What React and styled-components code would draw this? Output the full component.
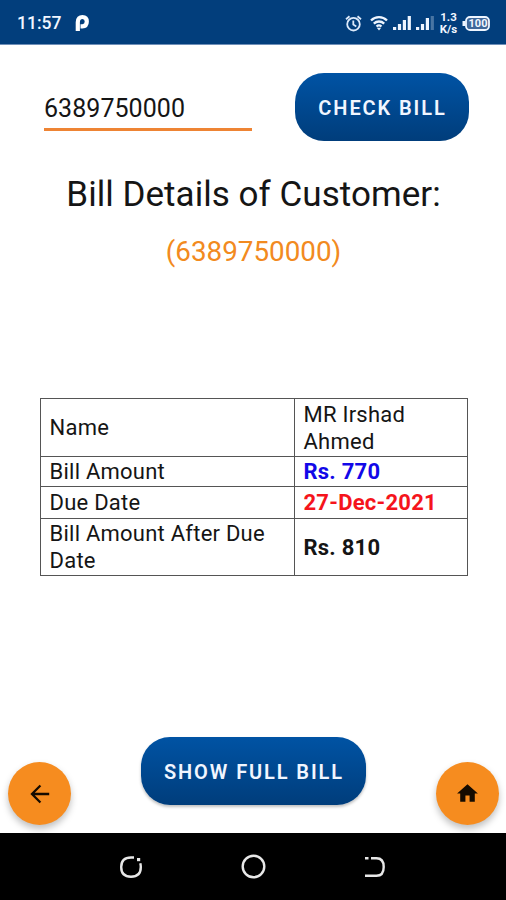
import React from 'react';
import styled, { createGlobalStyle } from 'styled-components';

const GlobalStyle = createGlobalStyle`
  * { box-sizing: border-box; }
  body { margin: 0; background: #fff; font-family: Roboto, sans-serif; color: #151515; }
`;

const Screen = styled.div`
  width: 506px;
  height: 900px;
  display: flex;
  flex-direction: column;
  overflow: hidden;
  background: #fff;
`;

const StatusBar = styled.header`
  height: 45px;
  flex: none;
  display: flex;
  align-items: center;
  padding: 2px 16px 0 17px;
  background: #023e7c;
  border-bottom: 1px solid #6f8fb8;
  color: #f1f6ff;
`;

const Clock = styled.span`
  font-size: 17.5px;
  font-weight: 500;
  width: 58px;
`;

const StatusIcons = styled.div`
  margin-left: auto;
  display: flex;
  align-items: center;
`;

const Glyph = styled.svg`
  display: block;
  flex: none;
  margin-left: ${(p) => p.$gap || 0}px;
`;

const Speed = styled.span`
  width: 21px;
  margin-left: 4px;
  margin-right: 1px;
  font-size: 11.5px;
  line-height: 12px;
  font-weight: 700;
  text-align: center;
`;

const Battery = styled.span`
  position: relative;
  width: 28px;
  height: 15px;
  margin-left: 2px;
`;

const BatteryLevel = styled.span`
  position: absolute;
  inset: 0 0 0 4px;
  font-size: 11px;
  line-height: 15px;
  font-weight: 700;
  text-align: center;
`;

const Content = styled.main`
  flex: 1;
  display: flex;
  flex-direction: column;
  align-items: center;
  padding-top: 28px;
`;

const LookupForm = styled.div`
  width: 425px;
  height: 68px;
  margin-left: 7px;
  display: flex;
  justify-content: space-between;
`;

const NumberInput = styled.input`
  width: 208px;
  height: 58px;
  padding: 15px 0 0;
  border: 0;
  border-bottom: 3px solid #ee8434;
  outline: none;
  background: transparent;
  font: 400 25px Roboto, sans-serif;
  letter-spacing: 0.05px;
  color: #151515;
`;

const ActionButton = styled.button`
  width: ${(p) => p.$width}px;
  height: 68px;
  padding: 2px 0 0 1px;
  border: 0;
  border-radius: 29px;
  background: linear-gradient(#0053a4, #003d7b);
  box-shadow: ${(p) => (p.$raised ? '0 2px 3px rgba(0, 0, 0, 0.25)' : 'none')};
  color: #f1f6ff;
  font: 600 20px Roboto, sans-serif;
  letter-spacing: ${(p) => p.$spacing}px;
  white-space: nowrap;
`;

const Title = styled.h1`
  margin: 33px 0 0;
  padding-left: 1px;
  font-size: 35px;
  line-height: 42px;
  font-weight: 400;
  letter-spacing: 0.04px;
`;

const Reference = styled.p`
  margin: 18px 0 0;
  padding-left: 1px;
  font-size: 27.8px;
  line-height: 36px;
  color: #f28a20;
`;

const BillTable = styled.table`
  width: 428px;
  margin: 128px 0 0 1px;
  border-collapse: collapse;
  table-layout: fixed;
  font-size: 22px;
  line-height: 27px;
  letter-spacing: 0.24px;
`;

const Row = styled.tr`
  height: ${(p) => p.$height}px;
`;

const Cell = styled.td`
  width: ${(p) => p.$width || 'auto'};
  padding: 0 9px;
  border: 1px solid #555;
  color: ${(p) => p.$color || '#151515'};
  font-weight: ${(p) => (p.$strong ? 700 : 400)};
`;

const ActionRow = styled.div`
  width: 100%;
  margin-top: auto;
  margin-bottom: 8px;
  padding: 0 7px 0 8px;
  display: flex;
  justify-content: space-between;
  align-items: flex-end;
`;

const ShowBillSlot = styled.div`
  padding-bottom: 20px;
`;

const RoundButton = styled.button`
  width: 63px;
  height: 63px;
  padding: 0;
  border: 0;
  border-radius: 50%;
  display: flex;
  align-items: center;
  justify-content: center;
  background: #f68c1f;
  box-shadow: 0 4px 7px rgba(0, 0, 0, 0.25);
`;

const NavBar = styled.nav`
  height: 67px;
  flex: none;
  display: grid;
  grid-template-columns: repeat(3, 122px);
  justify-content: center;
  align-items: center;
  justify-items: center;
  background: #000;
`;

const bills = [
  { label: 'Name', value: 'MR Irshad Ahmed', height: 58 },
  { label: 'Bill Amount', value: 'Rs. 770', height: 30, color: '#1208e8', strong: true },
  { label: 'Due Date', value: '27-Dec-2021', height: 32, color: '#f5141c', strong: true },
  { label: 'Bill Amount After Due Date', value: 'Rs. 810', height: 57, strong: true },
];

function AlarmIcon() {
  return (
    <Glyph width="17" height="17" viewBox="0 0 17 17" fill="none" stroke="#dce9fa" strokeWidth="1.8">
      <circle cx="8.5" cy="9.2" r="6.3" />
      <path d="M1 4.2 4.5 1.3M16 4.2 12.5 1.3M8.3 5.6v4l3 1.8" />
    </Glyph>
  );
}

function WifiIcon() {
  return (
    <Glyph $gap={8} width="18" height="16" viewBox="0 0 18 16" fill="none" stroke="#eef5ff" strokeWidth="2.3">
      <path d="M1 5.5C5.5 1 12.5 1 17 5.5M3.8 8.6c3-2.8 7.4-2.8 10.4 0M6.5 11.5c1.5-1.3 3.5-1.3 5 0" />
      <path d="M9 15.5 6.8 12.8h4.4z" fill="#eef5ff" stroke="none" />
    </Glyph>
  );
}

function SignalIcon({ gap, width, bars, faded }) {
  return (
    <Glyph $gap={gap} width={width} height="16" viewBox={`0 0 ${width} 16`} fill="#eef5ff">
      {bars.map((h, i) => (
        <rect key={i} x={i * 4.9} y={15 - h} width="3.2" height={h} opacity={i === faded ? 0.3 : 1} />
      ))}
    </Glyph>
  );
}

export default function App() {
  return (
    <Screen>
      <GlobalStyle />
      <StatusBar>
        <Clock>11:57</Clock>
        <Glyph width="15" height="18" viewBox="0 0 15 18" fill="none" stroke="#fff" strokeWidth="4.2">
          <path d="M2.8 17V8.2C2.8 4.7 4.8 3 7.4 3c2.8 0 4.4 1.8 4.4 4.6 0 3-1.7 4.7-4.4 4.7H5.5" />
        </Glyph>
        <StatusIcons>
          <AlarmIcon />
          <WifiIcon />
          <SignalIcon gap={5} width={19} bars={[3, 6, 10, 14]} />
          <SignalIcon gap={4} width={18} bars={[3, 6, 12, 14]} faded={3} />
          <Speed>1.3 K/s</Speed>
          <Battery>
            <Glyph width="28" height="15" viewBox="0 0 28 15" fill="none" stroke="#eef5ff" strokeWidth="1.8">
              <rect x="4" y="1" width="23" height="13" rx="4" fill="#3f6799" />
              <path d="M2 5v5" strokeWidth="3" />
            </Glyph>
            <BatteryLevel>100</BatteryLevel>
          </Battery>
        </StatusIcons>
      </StatusBar>

      <Content>
        <LookupForm>
          <NumberInput defaultValue="6389750000" aria-label="Customer number" />
          <ActionButton $width={174} $spacing={1.9}>CHECK BILL</ActionButton>
        </LookupForm>
        <Title>Bill Details of Customer:</Title>
        <Reference>(6389750000)</Reference>
        <BillTable>
          <tbody>
            {bills.map((bill) => (
              <Row key={bill.label} $height={bill.height}>
                <Cell $width="254px">{bill.label}</Cell>
                <Cell $color={bill.color} $strong={bill.strong}>{bill.value}</Cell>
              </Row>
            ))}
          </tbody>
        </BillTable>
        <ActionRow>
          <RoundButton aria-label="Back">
            <Glyph width="26" height="26" viewBox="0 0 24 24" fill="none" stroke="#150b00" strokeWidth="2.1">
              <path d="M20.5 12H5M12.4 4.2 4.6 12l7.8 7.8" />
            </Glyph>
          </RoundButton>
          <ShowBillSlot>
            <ActionButton $width={225} $spacing={1.9} $raised>SHOW FULL BILL</ActionButton>
          </ShowBillSlot>
          <RoundButton aria-label="Home">
            <Glyph width="25" height="25" viewBox="0 0 24 24" fill="#150b00">
              <path d="M10 20v-6h4v6h5v-8h3L12 3 2 12h3v8z" />
            </Glyph>
          </RoundButton>
        </ActionRow>
      </Content>

      <NavBar>
        <Glyph width="24" height="24" viewBox="0 0 24 24" fill="none" stroke="#e8e8e8" strokeWidth="2.4">
          <path d="M15 2.5h-3C5.5 2.5 2.2 5.6 2.2 12s3.3 9.7 9.8 9.7 9.8-3.3 9.8-9.7c0-1.4-.2-2.6-.5-3.8" />
          <path d="M18 4.6h3.2" strokeWidth="3.2" />
        </Glyph>
        <Glyph width="25" height="25" viewBox="0 0 25 25" fill="none" stroke="#e8e8e8" strokeWidth="2.4">
          <circle cx="12.5" cy="12.5" r="10.8" />
        </Glyph>
        <Glyph width="20" height="22" viewBox="0 0 20 22" fill="none" stroke="#e8e8e8" strokeWidth="2.4">
          <path d="M0 2.3h3.5M6 2.3h5.5c5 0 7.2 3 7.2 8.7 0 6-2.5 8.8-7.2 8.8H0" />
        </Glyph>
      </NavBar>
    </Screen>
  );
}
